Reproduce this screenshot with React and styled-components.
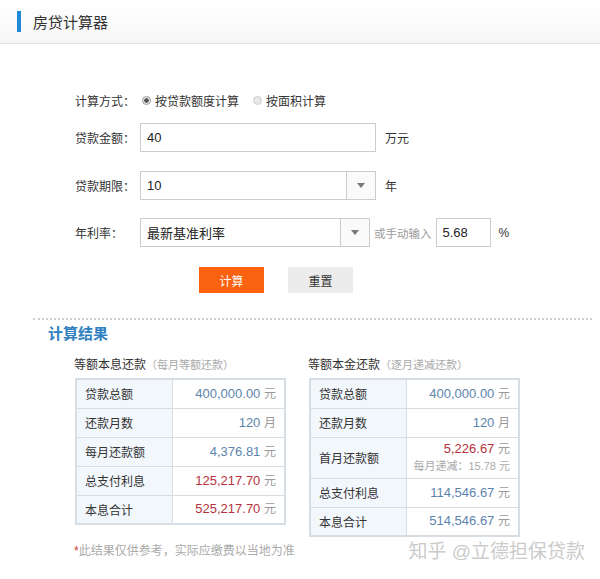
import React from 'react';
import styled, { createGlobalStyle } from 'styled-components';

const GlobalStyle = createGlobalStyle`
    body {
        margin: 0;
        background: #fff;
        font-family: "Liberation Sans", "Noto Sans CJK SC", sans-serif;
        color: #333;
    }
`;

const equalPay = [
    { label: '贷款总额', value: '400,000.00', unit: '元' },
    { label: '还款月数', value: '120', unit: '月' },
    { label: '每月还款额', value: '4,376.81', unit: '元' },
    { label: '总支付利息', value: '125,217.70', unit: '元', red: true },
    { label: '本息合计', value: '525,217.70', unit: '元', red: true },
];

const equalPrincipal = [
    { label: '贷款总额', value: '400,000.00', unit: '元' },
    { label: '还款月数', value: '120', unit: '月' },
    { label: '首月还款额', value: '5,226.67', unit: '元', red: true, note: '每月递减：15.78 元' },
    { label: '总支付利息', value: '114,546.67', unit: '元' },
    { label: '本息合计', value: '514,546.67', unit: '元' },
];

const Arrow = () => (
    <svg width="8" height="5" viewBox="0 0 8 5">
        <path d="M0 0 L8 0 L4 5 Z" fill="#777" />
    </svg>
);

const ResultTable = ({ rows }) => (
    <Table>
        <tbody>
            {rows.map((r) => (
                <Row key={r.label} tall={!!r.note}>
                    <LabelCell>{r.label}</LabelCell>
                    <ValueCell>
                        <Value red={r.red}>{r.value}</Value> <Unit>{r.unit}</Unit>
                        {r.note && <Note>{r.note}</Note>}
                    </ValueCell>
                </Row>
            ))}
        </tbody>
    </Table>
);

const App = () => {
    return (
        <Page>
            <GlobalStyle />
            <Header>
                <Bar />
                <Title>房贷计算器</Title>
            </Header>
            <Form>
                <FormRow top={46}>
                    <Label>计算方式：</Label>
                    <Radio checked />
                    <RadioText>按贷款额度计算</RadioText>
                    <Radio />
                    <RadioText>按面积计算</RadioText>
                </FormRow>
                <FormRow top={13}>
                    <Label>贷款金额：</Label>
                    <Input width={236}>40</Input>
                    <Suffix>万元</Suffix>
                </FormRow>
                <FormRow top={19}>
                    <Label>贷款期限：</Label>
                    <Select width={236}>
                        <SelectText>10</SelectText>
                        <ArrowBox><Arrow /></ArrowBox>
                    </Select>
                    <Suffix>年</Suffix>
                </FormRow>
                <FormRow top={18}>
                    <Label>年利率：</Label>
                    <Select width={230}>
                        <SelectText>最新基准利率</SelectText>
                        <ArrowBox><Arrow /></ArrowBox>
                    </Select>
                    <Hint>或手动输入</Hint>
                    <Input width={55}>5.68</Input>
                    <Suffix gap={8}>%</Suffix>
                </FormRow>
                <Buttons>
                    <Button primary>计算</Button>
                    <Button>重置</Button>
                </Buttons>
            </Form>
            <Results>
                <ResultTitle>计算结果</ResultTitle>
                <Columns>
                    <Column>
                        <SubTitle>等额本息还款<SubNote>（每月等额还款）</SubNote></SubTitle>
                        <ResultTable rows={equalPay} />
                    </Column>
                    <Column>
                        <SubTitle>等额本金还款<SubNote>（逐月递减还款）</SubNote></SubTitle>
                        <ResultTable rows={equalPrincipal} />
                    </Column>
                </Columns>
                <Footer>
                    <Footnote><Star>*</Star>此结果仅供参考，实际应缴费以当地为准</Footnote>
                    <Watermark>知乎 @立德担保贷款</Watermark>
                </Footer>
            </Results>
        </Page>
    );
};

const Page = styled.div`
    width: 600px;
    height: 579px;
    overflow: hidden;
`;

const Header = styled.header`
    height: 43px;
    display: flex;
    align-items: center;
    padding-left: 17px;
    background: linear-gradient(#ffffff, #f6f6f6);
    border-bottom: 1px solid #e2e2e2;
`;

const Bar = styled.div`
    width: 4px;
    height: 21px;
    background: #1f8ad6;
`;

const Title = styled.div`
    margin-left: 12px;
    font-size: 15px;
    color: #333;
`;

const Form = styled.div`
    padding-left: 75px;
`;

const FormRow = styled.div`
    display: flex;
    align-items: center;
    margin-top: ${(p) => p.top}px;
    font-size: 12px;
    min-height: 20px;
`;

const Label = styled.div`
    width: 65px;
    color: #333;
`;

const Radio = styled.span`
    box-sizing: border-box;
    width: 9px;
    height: 9px;
    margin-left: 2px;
    margin-right: 4px;
    border-radius: 50%;
    border: 1px solid ${(p) => (p.checked ? '#999' : '#ccc')};
    background: ${(p) => (p.checked ? 'radial-gradient(circle, #555 0 2px, #eee 2.5px)' : '#e8e8e8')};
`;

const RadioText = styled.span`
    margin-right: 12px;
    color: #333;
`;

const Input = styled.div`
    box-sizing: border-box;
    width: ${(p) => p.width}px;
    height: 29px;
    border: 1px solid #ccc;
    padding-left: 6px;
    display: flex;
    align-items: center;
    font-size: 13px;
    color: #222;
`;

const Select = styled.div`
    box-sizing: border-box;
    width: ${(p) => p.width}px;
    height: 29px;
    border: 1px solid #ccc;
    display: flex;
    align-items: stretch;
`;

const SelectText = styled.div`
    flex: 1;
    display: flex;
    align-items: center;
    padding-left: 6px;
    font-size: 13px;
    color: #222;
`;

const ArrowBox = styled.div`
    width: 28px;
    border-left: 1px solid #ccc;
    display: flex;
    align-items: center;
    justify-content: center;
    background: #fafafa;
`;

const Suffix = styled.span`
    margin-left: ${(p) => p.gap || 9}px;
    font-size: 12px;
    color: #333;
`;

const Hint = styled.span`
    margin: 0 4px 0 4px;
    color: #999;
    font-size: 11.5px;
`;

const Buttons = styled.div`
    display: flex;
    gap: 24px;
    margin: 20px 0 0 124px;
`;

const Button = styled.div`
    width: 65px;
    height: 26px;
    display: flex;
    align-items: center;
    justify-content: center;
    font-size: 12px;
    background: ${(p) => (p.primary ? '#fb6210' : '#ececec')};
    color: ${(p) => (p.primary ? '#fff' : '#333')};
`;

const Results = styled.section`
    margin: 25px 8px 0 33px;
    border-top: 2px dotted #cfcfcf;
`;

const ResultTitle = styled.h2`
    margin: 3px 0 0 15px;
    font-size: 15px;
    font-weight: bold;
    color: #2f7fc1;
    line-height: 22px;
`;

const Columns = styled.div`
    display: flex;
    gap: 22px;
    margin: 10px 0 0 41px;
`;

const Column = styled.div`
    display: flex;
    flex-direction: column;
`;

const SubTitle = styled.div`
    font-size: 12px;
    color: #333;
    height: 20px;
    line-height: 20px;
    margin-bottom: 3px;
`;

const SubNote = styled.span`
    color: #aaa;
    font-size: 11px;
`;

const Table = styled.table`
    border-collapse: collapse;
    margin-left: 1px;
    border: 2px solid #d6dde5;
`;

const Row = styled.tr`
    height: ${(p) => (p.tall ? 41 : 29)}px;
`;

const LabelCell = styled.td`
    box-sizing: border-box;
    width: 96px;
    padding: 0 0 0 8px;
    background: #f2f7fc;
    border: 1px solid #d6dde5;
    font-size: 12px;
    color: #333;
`;

const ValueCell = styled.td`
    box-sizing: border-box;
    width: 113px;
    padding: 0 8px 0 0;
    text-align: right;
    border: 1px solid #d6dde5;
    font-size: 13px;
    line-height: 17px;
`;

const Value = styled.span`
    color: ${(p) => (p.red ? '#b5333b' : '#5d84ad')};
`;

const Unit = styled.span`
    color: #999;
    font-size: 12px;
`;

const Note = styled.div`
    font-size: 11px;
    color: #aaa;
`;

const Footer = styled.div`
    display: flex;
    justify-content: space-between;
    align-items: center;
    height: 20px;
    margin: 2px 0 0 41px;
    padding-right: 7px;
`;

const Footnote = styled.div`
    font-size: 12px;
    color: #aaa;
`;

const Star = styled.span`
    color: #c33;
`;

const Watermark = styled.div`
    font-size: 19px;
    color: #cbcbcb;
    text-shadow: 0 0 1px #fff;
`;

export default App;
